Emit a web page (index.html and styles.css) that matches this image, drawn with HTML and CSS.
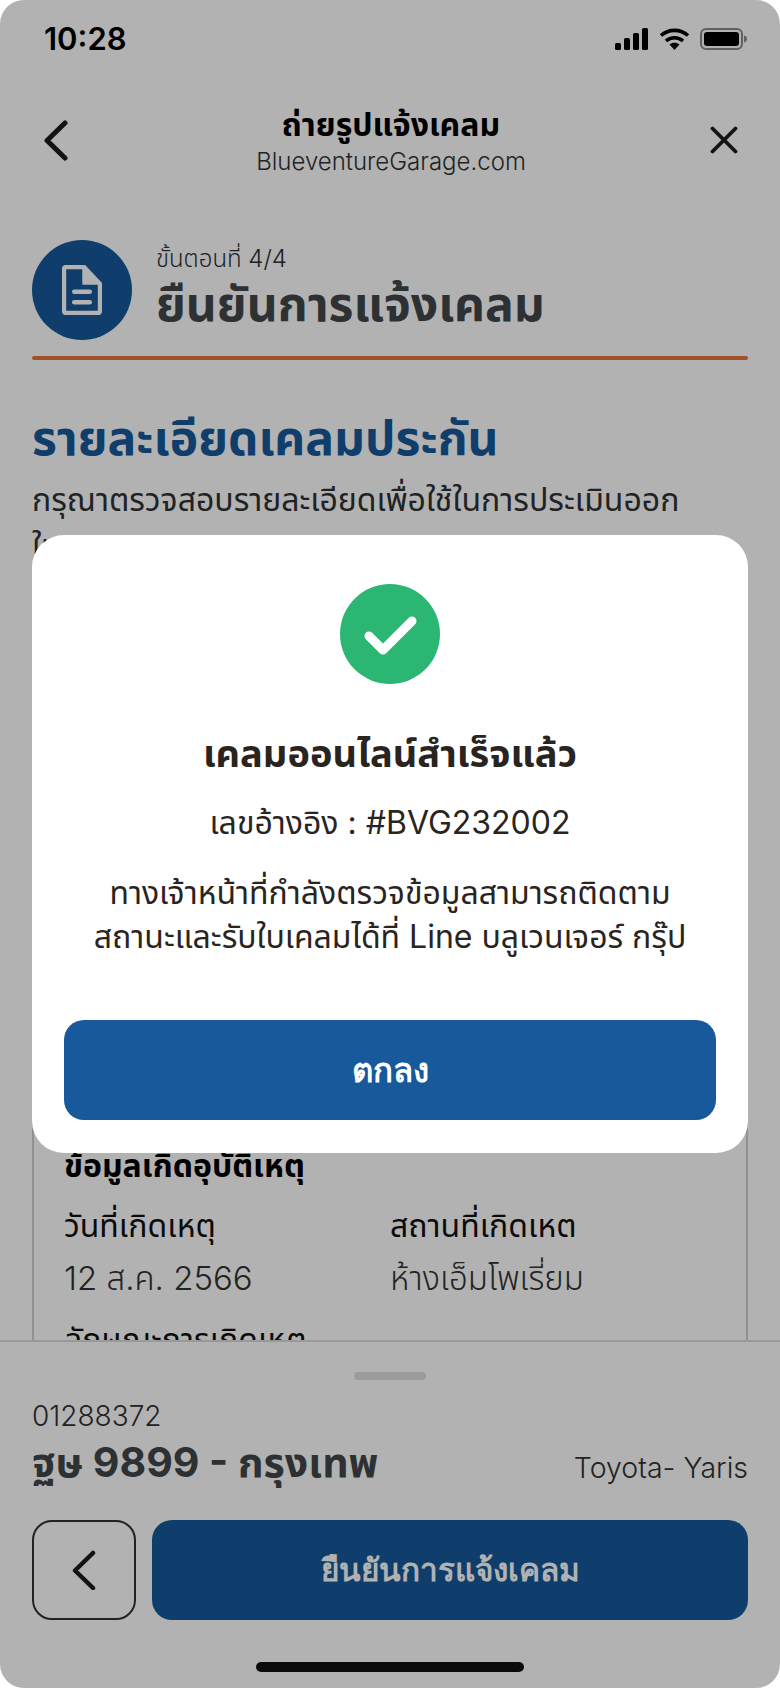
FILE: index.html
```html
<!DOCTYPE html>
<html lang="th">
<head>
  <meta charset="UTF-8">
  <title>ถ่ายรูปแจ้งเคลม</title>
  <link rel="stylesheet" href="styles.css">
</head>
<body>
  <div class="screen">
    <div class="status-bar">
      <span class="time">10:28</span>
      <div class="status-icons">
        <svg width="34" height="22" viewBox="0 0 34 22"><rect x="0" y="15" width="6" height="7" rx="1.5"/><rect x="9" y="10" width="6" height="12" rx="1.5"/><rect x="18" y="5" width="6" height="17" rx="1.5"/><rect x="27" y="0" width="6" height="22" rx="1.5"/></svg>
        <svg width="31" height="22" viewBox="0 0 31 22" fill="none" stroke="#000" stroke-width="3.6"><path d="M2 7.500C9.500 .6 21.500 .6 29 7.500"/><path d="M7 13C11.800 8.600 19.200 8.600 24 13"/><path d="M15.500 22l-5-5.400c2.800-2.500 7.200-2.500 10 0z" fill="#000" stroke="none"/></svg>
        <svg width="48" height="22" viewBox="0 0 48 22"><rect x="1" y="1" width="41" height="20" rx="5" fill="none" stroke="#000" stroke-opacity=".45" stroke-width="2"/><rect x="4" y="4" width="35" height="14" rx="3"/><path d="M44 7.500c2 .6 3 1.800 3 3.500s-1 2.900-3 3.500z" fill-opacity=".45"/></svg>
      </div>
    </div>

    <header class="nav">
      <svg class="nav-back" width="28" height="43" viewBox="0 0 28 43"><path d="M21 4L3 21.500 21 39" fill="none" stroke="#1c1c1c" stroke-width="5" stroke-linecap="round" stroke-linejoin="round"/></svg>
      <div class="nav-title">
        <h1>ถ่ายรูปแจ้งเคลม</h1>
        <p>BlueventureGarage.com</p>
      </div>
      <svg class="nav-close" width="28" height="28" viewBox="0 0 28 28"><path d="M2.500 2.500l23 23M25.500 2.500l-23 23" fill="none" stroke="#1c1c1c" stroke-width="3.800" stroke-linecap="round"/></svg>
    </header>

    <main class="content">
      <div class="step">
        <div class="step-icon">
          <svg width="40" height="50" viewBox="0 0 40 50"><path d="M4 2h18l16 17v27a2 2 0 0 1-2 2H4a2 2 0 0 1-2-2V4a2 2 0 0 1 2-2z" fill="none" stroke="#fff" stroke-width="4.400" stroke-linejoin="round"/><path d="M21 2v17h17z" fill="#fff" stroke="#fff" stroke-width="1.500" stroke-linejoin="round"/><rect x="10" y="24.500" width="20" height="4.500" rx="2.250" fill="#fff"/><rect x="10" y="35" width="20" height="4.500" rx="2.250" fill="#fff"/></svg>
        </div>
        <div class="step-text">
          <div class="step-no">ขั้นตอนที่ 4/4</div>
          <div class="step-name">ยืนยันการแจ้งเคลม</div>
        </div>
      </div>
      <div class="divider"></div>

      <h2 class="heading">รายละเอียดเคลมประกัน</h2>
      <p class="intro">กรุณาตรวจสอบรายละเอียดเพื่อใช้ในการประเมินออก<br>ใบเคลม</p>

      <section class="card">
        <h3>ข้อมูลเกิดอุบัติเหตุ</h3>
        <div class="info-grid">
          <div>
            <div class="info-label">วันที่เกิดเหตุ</div>
            <div class="info-value">12 ส.ค. 2566</div>
          </div>
          <div>
            <div class="info-label">สถานที่เกิดเหต</div>
            <div class="info-value">ห้างเอ็มโพเรี่ยม</div>
          </div>
        </div>
        <div class="info-label info-next">ลักษณะการเกิดเหตุ</div>
      </section>
    </main>

    <footer class="sheet">
      <div class="grabber"></div>
      <div class="car-no">01288372</div>
      <div class="car-row">
        <span class="plate">ฐษ 9899 - กรุงเทพ</span>
        <span class="car-model">Toyota- Yaris</span>
      </div>
      <div class="actions">
        <button class="btn-back">
          <svg width="24" height="40" viewBox="0 0 24 40"><path d="M21 3L3 20.500 21 38" fill="none" stroke="#1c1c1c" stroke-width="4.500" stroke-linecap="round" stroke-linejoin="round"/></svg>
        </button>
        <button class="btn-confirm">ยืนยันการแจ้งเคลม</button>
      </div>
      <div class="home-bar"></div>
    </footer>

    <div class="overlay">
      <div class="modal">
        <svg class="modal-check" width="100" height="100" viewBox="0 0 100 100"><circle cx="50" cy="50" r="50" fill="#2cb673"/><path d="M29 52l14 14 29-29" fill="none" stroke="#fff" stroke-width="9" stroke-linecap="round" stroke-linejoin="round"/></svg>
        <h2>เคลมออนไลน์สำเร็จแล้ว</h2>
        <p class="modal-ref">เลขอ้างอิง : #BVG232002</p>
        <p class="modal-text">ทางเจ้าหน้าที่กำลังตรวจข้อมูลสามารถติดตาม<br>สถานะและรับใบเคลมได้ที่ Line บลูเวนเจอร์ กรุ๊ป</p>
        <button class="modal-btn">ตกลง</button>
      </div>
    </div>
  </div>
</body>
</html>
```

FILE: styles.css
```css
* {
  box-sizing: border-box;
}

html, body {
  margin: 0;
  background: #fff;
}

body {
  font-family: "Inter", "Noto Sans Thai", "Noto Sans", sans-serif;
  color: #2e3133;
}

h1, h2, h3, p {
  margin: 0;
}

.screen {
  position: relative;
  width: 780px;
  height: 1688px;
  display: flex;
  flex-direction: column;
  overflow: hidden;
}

.status-bar {
  height: 80px;
  padding: 20px 32px 0 44px;
  display: flex;
  justify-content: space-between;
  align-items: flex-start;
  color: #000;
}

.time {
  font-size: 31px;
  font-weight: 600;
  line-height: 38px;
}

.status-icons {
  display: flex;
  gap: 10px;
  padding-top: 8px;
}

.nav {
  height: 120px;
  padding: 0 42px 0 44px;
  display: flex;
  align-items: center;
  justify-content: space-between;
}

.nav-title {
  text-align: center;
}

.nav-title h1 {
  font-size: 32px;
  font-weight: 700;
  line-height: 44px;
  color: #000;
}

.nav-title p {
  font-size: 24px;
  font-weight: 300;
  line-height: 30px;
  color: #333;
}

.content {
  flex: 1;
  min-height: 0;
  overflow: hidden;
  padding: 40px 32px 0;
}

.step {
  display: flex;
  align-items: center;
  gap: 24px;
}

.step-icon {
  width: 100px;
  height: 100px;
  border-radius: 50%;
  background: #17599b;
  display: flex;
  align-items: center;
  justify-content: center;
}

.step-text {
  padding-bottom: 6px;
}

.step-no {
  font-size: 24px;
  font-weight: 300;
  line-height: 34px;
}

.step-name {
  font-size: 48px;
  font-weight: 700;
  line-height: 56px;
  color: #42474a;
}

.divider {
  height: 4px;
  margin-top: 16px;
  border-radius: 2px;
  background: #e5753c;
}

.heading {
  margin-top: 48px;
  font-size: 48px;
  font-weight: 700;
  line-height: 60px;
  color: #17599b;
}

.intro {
  font-size: 32px;
  line-height: 46px;
  margin-top: 9px;
}

.card {
  margin-top: 30px;
  height: 900px;
  padding: 543px 30px 0;
  border: 2px solid #cdd1d5;
  border-radius: 16px;
}

.card h3 {
  font-size: 32px;
  font-weight: 700;
  line-height: 44px;
  color: #000;
}

.info-grid {
  display: grid;
  grid-template-columns: 1fr 1fr;
  margin-top: 16px;
}

.info-label {
  font-size: 32px;
  line-height: 44px;
  color: #111;
}

.info-value {
  font-size: 33px;
  font-weight: 300;
  line-height: 44px;
  margin-top: 8px;
  color: #333;
}

.info-next {
  margin-top: 18px;
}

.sheet {
  height: 348px;
  padding: 30px 32px 0;
  border-top: 2px solid #dbdbdb;
  background: #fff;
  flex: none;
}

.grabber {
  width: 72px;
  height: 8px;
  margin: 0 auto;
  border-radius: 4px;
  background: #dfdfdf;
}

.car-no {
  margin-top: 16px;
  font-size: 28px;
  font-weight: 300;
  line-height: 40px;
}

.car-row {
  display: flex;
  justify-content: space-between;
  align-items: flex-end;
}

.plate {
  font-size: 41px;
  font-weight: 700;
  line-height: 52px;
  margin-bottom: 4px;
  color: #42474a;
}

.car-model {
  font-size: 28.500px;
  font-weight: 300;
  line-height: 48px;
  color: #333;
}

.actions {
  display: flex;
  gap: 16px;
  margin-top: 28px;
}

.btn-back {
  width: 104px;
  height: 100px;
  padding: 0;
  display: flex;
  align-items: center;
  justify-content: center;
  background: none;
  border: 2px solid #333;
  border-radius: 20px;
}

.btn-confirm {
  flex: 1;
  height: 100px;
  border: 0;
  border-radius: 20px;
  background: #17599b;
  color: #fff;
  font: 700 31.500px "Inter", "Noto Sans", sans-serif;
}

.home-bar {
  width: 268px;
  height: 10px;
  margin: 42px auto 0;
  border-radius: 5px;
  background: #111;
}

.overlay {
  position: absolute;
  inset: 0;
  display: flex;
  align-items: center;
  justify-content: center;
  border-radius: 24px;
  background: rgba(0, 0, 0, .3);
}

.modal {
  width: 716px;
  height: 618px;
  padding: 49px 32px 0;
  border-radius: 32px;
  background: #fff;
  text-align: center;
  color: #2a241f;
}

.modal-check {
  display: block;
  margin: 0 auto;
}

.modal h2 {
  margin-top: 44px;
  font-size: 38px;
  font-weight: 700;
  line-height: 50px;
}

.modal-ref {
  margin-top: 23px;
  font-size: 32px;
  line-height: 44px;
}

.modal-text {
  margin-top: 26px;
  font-size: 32px;
  line-height: 44px;
  white-space: nowrap;
}

.modal-btn {
  display: block;
  width: 652px;
  height: 100px;
  margin-top: 61px;
  border: 0;
  border-radius: 20px;
  background: #17599b;
  color: #fff;
  font: 700 33px "Inter", "Noto Sans", sans-serif;
}
```
